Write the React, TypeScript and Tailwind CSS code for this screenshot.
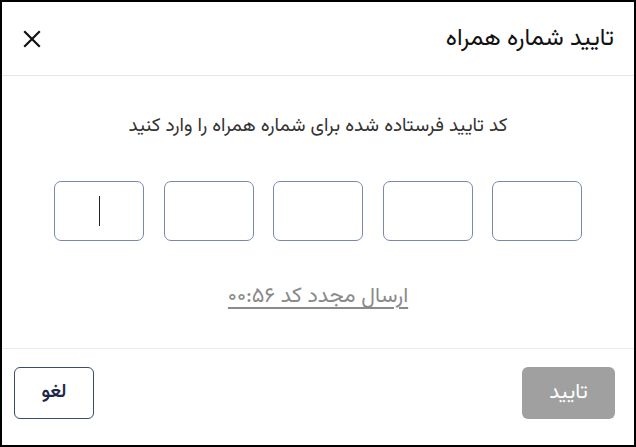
import { useState } from "react";

const FONT = "font-['Vazirmatn','DejaVu_Sans','Noto_Sans',sans-serif]";

function CloseIcon() {
  return (
    <svg width="20" height="20" viewBox="0 0 20 20" fill="none" stroke="#111" strokeWidth="2.2" strokeLinecap="square">
      <path d="M3 3 L17 17 M17 3 L3 17" />
    </svg>
  );
}

export default function App() {
  const [digits] = useState(["", "", "", "", ""]);

  return (
    <div dir="rtl" className={`flex h-[447px] w-[636px] flex-col border-2 border-black bg-white ${FONT}`}>
      <div className="flex h-[74px] shrink-0 items-center justify-between border-b border-[#e6e6e6] pl-[18px] pr-[20px]">
        <h1 className="text-[24px] font-normal text-[#111]">تایید شماره همراه</h1>
        <button className="flex h-6 w-6 items-center justify-center">
          <CloseIcon />
        </button>
      </div>

      <div className="flex flex-1 flex-col items-center pt-[37px]">
        <p className="text-[19px] leading-[28px] text-[#333]">کد تایید فرستاده شده برای شماره همراه را وارد کنید</p>

        <div dir="ltr" className="mt-[40px] flex gap-[19.5px]">
          {digits.map((d, i) => (
            <div
              key={i}
              className="relative flex h-[60px] w-[90px] items-center justify-center rounded-[7px] border border-[#7a88b0]"
            >
              {i === 0 && <span className="h-[30px] w-px bg-[#222]" />}
              {d}
            </div>
          ))}
        </div>

        <a className="mt-[41px] text-[21.5px] leading-[30px] text-[#8a8a8a] underline underline-offset-[5px]">
          ارسال مجدد کد ۰۰:۵۶
        </a>
      </div>

      <div className="flex shrink-0 items-start justify-between border-t border-[#ececec] pb-[26px] pl-[12px] pr-[19px] pt-[18px]">
        <button className="h-[52px] w-[93px] rounded-[6px] bg-[#a0a0a0] text-[21px] text-white">تایید</button>
        <button className="h-[52px] w-[80px] rounded-[6px] border border-[#3e4a6b] bg-white text-[19px] font-semibold text-[#1c2647]">
          لغو
        </button>
      </div>
    </div>
  );
}
